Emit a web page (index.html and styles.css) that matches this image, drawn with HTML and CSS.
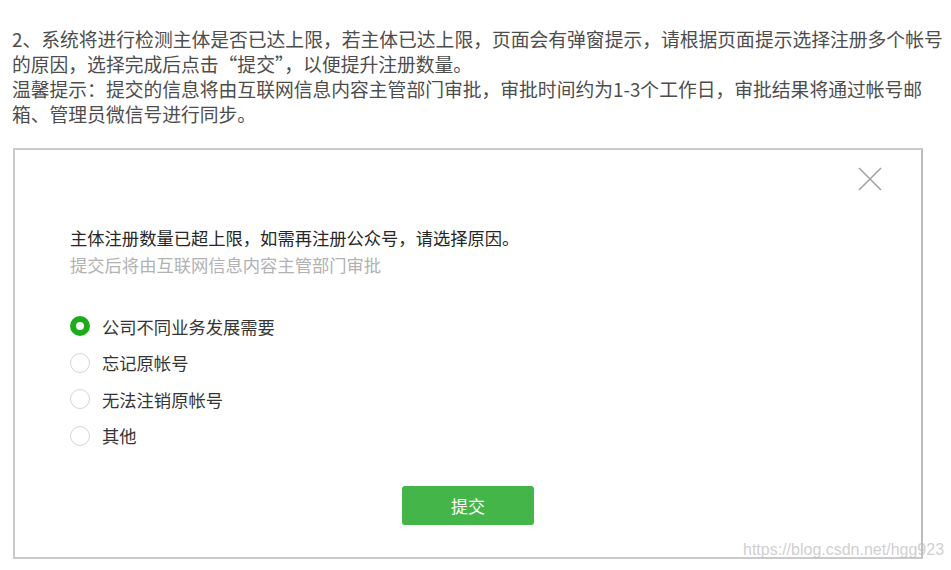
FILE: index.html
```html
<!DOCTYPE html>
<html lang="zh-CN">
<head>
    <meta charset="UTF-8">
    <meta name="viewport" content="width=device-width, initial-scale=1.0">
    <title>注册多个帐号</title>
    <link rel="stylesheet" href="styles.css">
</head>
<body>
    <div class="article">
        <p class="step">2、系统将进行检测主体是否已达上限，若主体已达上限，页面会有弹窗提示，请根据页面提示选择注册多个帐号的原因，选择完成后点击“提交”，以便提升注册数量。<br>温馨提示：提交的信息将由互联网信息内容主管部门审批，审批时间约为1-3个工作日，审批结果将通过帐号邮箱、管理员微信号进行同步。</p>

        <div class="dialog">
            <div class="dialog-head">
                <svg class="close" width="24" height="24" viewBox="0 0 24 24">
                    <path d="M1 1 L23 23 M23 1 L1 23" stroke="#a3a3a3" stroke-width="1.6" fill="none"/>
                </svg>
            </div>
            <div class="dialog-body">
                <p class="title">主体注册数量已超上限，如需再注册公众号，请选择原因。</p>
                <p class="sub">提交后将由互联网信息内容主管部门审批</p>

                <ul class="reasons">
                    <li><span class="radio checked"></span>公司不同业务发展需要</li>
                    <li><span class="radio"></span>忘记原帐号</li>
                    <li><span class="radio"></span>无法注销原帐号</li>
                    <li><span class="radio"></span>其他</li>
                </ul>

                <div class="actions">
                    <a class="btn-submit">提交</a>
                </div>
            </div>
            <span class="watermark">https://blog.csdn.net/hgg923</span>
        </div>
    </div>
</body>
</html>
```

FILE: styles.css
```css
body {
    margin: 0;
    background-color: #fff;
    font-family: "Noto Sans CJK SC", "Noto Sans", sans-serif;
}

.article {
    width: 935px;
    padding-left: 12px;
}

.step {
    margin: 26px 0 22px 0;
    font-size: 18.8px;
    line-height: 25px;
    color: #4d4d4d;
}

.dialog {
    position: relative;
    box-sizing: border-box;
    width: 910px;
    height: 411px;
    margin-left: 1px;
    border: 2px solid #cacaca;
    border-right-color: #bdbdbd;
    background-color: #fff;
}

.dialog-head {
    display: flex;
    justify-content: flex-end;
    padding: 17px 39px 0 0;
}

.close {
    display: block;
}

.dialog-body {
    padding: 0 0 0 55px;
}

.title {
    margin: 33px 0 0 0;
    font-size: 17.3px;
    line-height: 27px;
    color: #262626;
}

.sub {
    margin: 0;
    font-size: 17.3px;
    line-height: 27px;
    color: #b2b2b2;
}

.reasons {
    list-style: none;
    margin: 30px 0 0 0;
    padding: 0;
}

.reasons li {
    display: flex;
    align-items: center;
    height: 36.5px;
    font-size: 17.3px;
    color: #353535;
}

.radio {
    box-sizing: border-box;
    width: 20px;
    height: 20px;
    margin-right: 12px;
    border: 1px solid #d5d5d5;
    border-radius: 50%;
    background-color: #fff;
}

.radio.checked {
    border: 6.5px solid #1aad19;
}

.actions {
    display: flex;
    justify-content: center;
    margin: 32px 55px 0 0;
}

.btn-submit {
    display: block;
    width: 132px;
    height: 39px;
    line-height: 39px;
    text-align: center;
    font-size: 17px;
    color: #fff;
    background-color: #44b549;
    border-radius: 3px;
}

.watermark {
    position: absolute;
    left: 728px;
    top: 391px;
    font-family: "Liberation Sans", Arial, sans-serif;
    font-size: 16px;
    line-height: 18px;
    color: rgba(190, 190, 190, 0.75);
    white-space: nowrap;
}
```
